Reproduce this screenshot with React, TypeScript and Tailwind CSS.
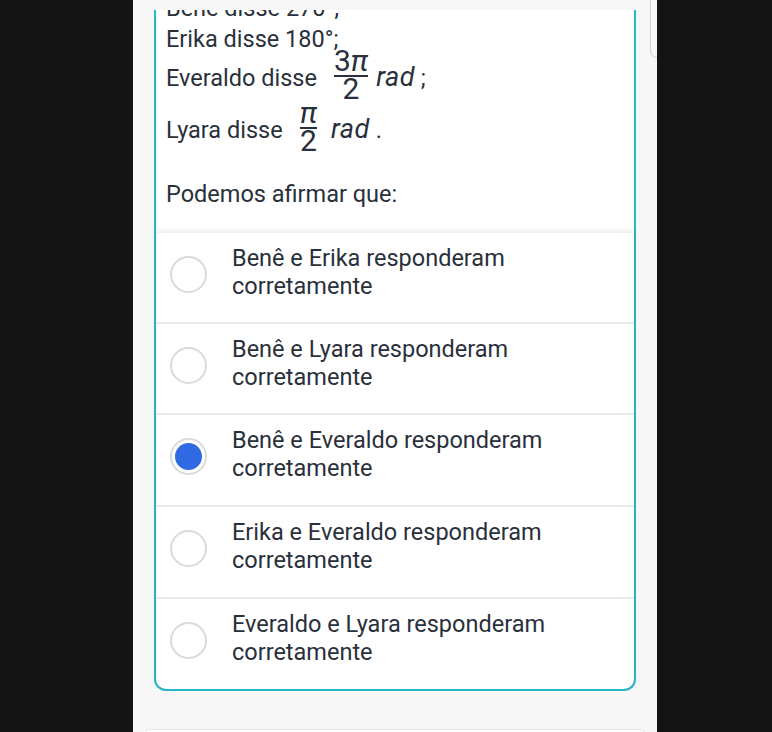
import React from "react"

const options = [
  { label: "Benê e Erika responderam", selected: false, h: "h-[89px]" },
  { label: "Benê e Lyara responderam", selected: false, h: "h-[91px] border-t-2" },
  { label: "Benê e Everaldo responderam", selected: true, h: "h-[92px] border-t-2" },
  { label: "Erika e Everaldo responderam", selected: false, h: "h-[92px] border-t-2" },
  { label: "Everaldo e Lyara responderam", selected: false, h: "h-[92px] border-t-2" },
]

function Fraction({ top, className }: { top: string; className: string }) {
  return (
    <span className={`inline-flex flex-col items-center align-[15px] ${className}`}>
      <span className="text-[30px] leading-[24px]">
        {top}
        <i>π</i>
      </span>
      <span className="mt-[2px] h-[2px] w-full bg-[#2a303b]" />
      <span className="text-[30px] leading-[24px]">2</span>
    </span>
  )
}

function Radio({ selected }: { selected: boolean }) {
  return (
    <span className="mt-[5px] flex h-[37px] w-[37px] shrink-0 items-center justify-center rounded-full border-2 border-[#dadada] bg-white">
      {selected && <span className="h-[27px] w-[27px] rounded-full bg-[#2f69e4]" />}
    </span>
  )
}

export default function App() {
  return (
    <div className="flex h-[732px] w-full overflow-hidden bg-[#141414] font-['Roboto',sans-serif] text-[#2a303b]">
      <div className="w-[133px] shrink-0" />
      <div className="relative w-[524px] shrink-0 overflow-hidden bg-[#f7f7f7]">
        {/* sticky header strip covering the scrolled text */}
        <div className="absolute inset-x-0 top-0 z-10 h-[10px] bg-[#f7f7f7]" />
        <div className="absolute right-0 top-[-10px] z-20 h-[68px] w-[7px] rounded-bl-lg border-b border-l border-[#d2d2d2]" />

        <div className="mx-[21px] mt-[13px] rounded-b-xl border-x-2 border-b-2 border-[#2ab6c9] bg-white">
          <div className="pl-[10px] text-[23.5px]">
            <p className="-mt-[20px] leading-[31px]">Benê disse 270°;</p>
            <p className="leading-[31px]">Erika disse 180°;</p>
            <p className="-mt-[6px] leading-[31px]">
              Everaldo disse
              <Fraction top="3" className="ml-[17px] mr-[8px]" />
              <i className="text-[27px] tracking-[0.5px]">rad</i> ;
            </p>
            <p className="leading-[31px]">
              Lyara disse
              <Fraction top="" className="ml-[17px] mr-[14px]" />
              <i className="text-[27px] tracking-[0.5px]">rad</i> .
            </p>
            <p className="mt-[26px] pb-[23px] leading-[31px]">Podemos afirmar que:</p>
          </div>

          <div className="shadow-[0_-3px_5px_rgba(0,0,0,0.07)]">
            {options.map((o) => (
              <div
                key={o.label}
                className={`flex items-center border-[#e9e9e9] pb-[12px] pl-[14px] ${o.h}`}
              >
                <Radio selected={o.selected} />
                <div className="ml-[25px] text-[23.5px] leading-[28px]">
                  <div>{o.label}</div>
                  <div>corretamente</div>
                </div>
              </div>
            ))}
          </div>
        </div>

        <div className="mx-[10px] mt-[38px] h-[40px] rounded-t-lg border border-[#e6e6e6] bg-white" />
      </div>
    </div>
  )
}
